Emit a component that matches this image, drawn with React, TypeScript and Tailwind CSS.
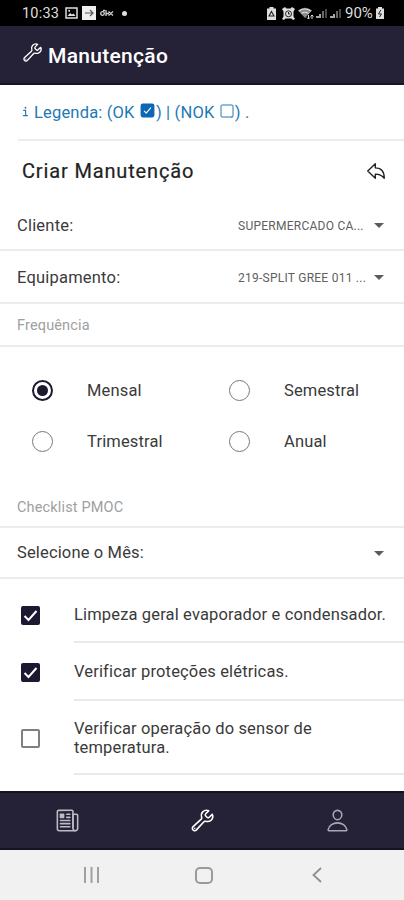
import React, { useState } from "react";
import {
  IoArrowUndoOutline,
  IoBuildOutline,
  IoCheckbox,
  IoInformationOutline,
  IoNewspaperOutline,
  IoPersonOutline,
  IoSquareOutline,
} from "react-icons/io5";

const frequencies = ["Mensal", "Semestral", "Trimestral", "Anual"];

const initialTasks = [
  { label: "Limpeza geral evaporador e condensador.", done: true, height: "h-[56px]" },
  { label: "Verificar proteções elétricas.", done: true, height: "h-[58px]" },
  { label: "Verificar operação do sensor de temperatura.", done: false, height: "h-[74px]" },
];

function StatusBar() {
  return (
    <div className="h-[26px] shrink-0 bg-black text-[#dedede] flex items-center justify-between pl-[22px] pr-[20px]">
      <div className="flex items-center">
        <span className="w-[37px] pt-[2px] text-[14.5px] leading-none tracking-[0.2px]">10:33</span>
        <svg width="13" height="12" viewBox="0 0 13 12" className="ml-[6px]">
          <rect x="1" y="1" width="11" height="10" fill="none" stroke="#dedede" strokeWidth="1.5" />
          <path d="M2.5 9l2.5-3 2 1.6 1.5-1L10.5 9z" fill="#dedede" />
          <circle cx="4.2" cy="3.8" r="1" fill="#dedede" />
        </svg>
        <svg width="14" height="14" viewBox="0 0 14 14" className="ml-[4px]">
          <rect width="14" height="14" fill="#eeeeee" />
          <path d="M3 7h8M8 4l3 3-3 3" fill="none" stroke="#555555" strokeWidth="1.2" />
        </svg>
        <svg width="14" height="8" viewBox="0 0 14 8" className="ml-[4px]" fill="none" stroke="#cfcfcf" strokeWidth="1.3">
          <circle cx="2.5" cy="4.5" r="1.8" />
          <path d="M3 1.5h2M6 1v6M8.5 2.5L13 6.5M13 2.5L8.5 6.5M6 4.5h3" />
        </svg>
        <span className="ml-[8px] w-[5px] h-[5px] rounded-full bg-[#dedede]" />
      </div>
      <div className="flex items-center">
        <svg width="9" height="13" viewBox="0 0 9 13">
          <path d="M2.5 0h4v1.5H9V13H0V1.5h2.5z" fill="#dedede" />
          <path d="M4.5 4.5L7 9H2z" fill="none" stroke="#222222" strokeWidth="1.1" />
        </svg>
        <svg width="13" height="13" viewBox="0 0 13 13" className="ml-[6px]">
          <path d="M0 2l3-2 1.5 1.5h4L10 0l3 2-1.5 2.5v5L13 12l-2 1-1.5-1.5h-6L2 13l-2-1 1.5-2.5v-5z" fill="#dedede" />
          <circle cx="6.5" cy="6.8" r="3" fill="none" stroke="#222222" strokeWidth="1" />
          <path d="M6.5 5v2h1.5" fill="none" stroke="#222222" strokeWidth="1" />
        </svg>
        <svg width="17" height="13" viewBox="0 0 17 13" className="ml-[3px]">
          <path d="M0 3.5Q7 -2 14 3.5L7 11z" fill="#8c8c8c" />
          <path d="M1 4q6-4 12 0M3.5 6.5q3.5-2.5 7 0" fill="none" stroke="#dedede" strokeWidth="1.2" />
          <path d="M10.5 8v4M9 10.5l1.5 1.5 1.5-1.5M14 12V8M12.5 9.5L14 8l1.5 1.5" fill="none" stroke="#dedede" />
        </svg>
        <svg width="27" height="12" viewBox="0 0 27 12">
          <path d="M1 10h3M5 11V7M19 11V7M15 10h3" stroke="#dedede" strokeWidth="1.5" />
          <path d="M8 11V4M22 11V4" stroke="#8a8a8a" strokeWidth="1.5" />
          <path d="M11 11V2M25 11V2" stroke="#4a4a4a" strokeWidth="2" />
        </svg>
        <span className="ml-[3px] w-[31px] pt-[1px] text-[15px] leading-none">90%</span>
        <svg width="8" height="12" viewBox="0 0 8 12">
          <path d="M2 0h4v1.5h2V12H0V1.5h2z" fill="#dedede" />
          <path d="M4.8 3L2.5 7h3L3.5 10" fill="none" stroke="#222222" />
        </svg>
      </div>
    </div>
  );
}

function Caret() {
  return (
    <svg width="10" height="5" viewBox="0 0 10 5" className="shrink-0">
      <path d="M0 0h10L5 5z" fill="#5c5c5c" />
    </svg>
  );
}

function Checkbox({ checked }: { checked: boolean }) {
  if (!checked) {
    return <span className="block w-[19px] h-[19px] rounded-[2px] border-2 border-[#808080] bg-white" />;
  }
  return (
    <span className="block w-[19px] h-[19px] rounded-[2px] bg-[#1b1830]">
      <svg width="19" height="19" viewBox="0 0 19 19">
        <path d="M3.5 10l4 4L15.5 5" fill="none" stroke="#ffffff" strokeWidth="2" />
      </svg>
    </span>
  );
}

export default function App() {
  const [frequency, setFrequency] = useState("Mensal");
  const [tasks, setTasks] = useState(initialTasks);

  const toggleTask = (index: number) => {
    setTasks(tasks.map((t, i) => (i === index ? { ...t, done: !t.done } : t)));
  };

  return (
    <div className="w-[404px] h-[900px] overflow-hidden bg-white flex flex-col font-['Roboto',sans-serif] text-[#3a3a3a]">
      <StatusBar />

      {/* Header */}
      <header className="h-[59px] shrink-0 bg-[#252136] border-b-2 border-[#17151f] flex items-center pl-[22px] text-white">
        <IoBuildOutline className="w-[21px] h-[21px] -mt-[4px]" />
        <h1 className="ml-[5px] mt-[3px] text-[21px] font-medium leading-none tracking-[0.3px]">Manutenção</h1>
      </header>

      <main className="flex-1 min-h-0 flex flex-col">
        {/* Legend */}
        <div className="h-[56px] pt-[2px] shrink-0 ml-[18px] border-b-2 border-[#ececec] flex items-center text-[16.5px] leading-none tracking-[0.18px] text-[#2279b5] whitespace-pre">
          <IoInformationOutline className="w-[15px] h-[15px] -mt-[4px]" />
          <span className="ml-[1px]">Legenda: (OK </span>
          <IoCheckbox className="w-[17px] h-[17px] -mt-[5px] text-[#0c66b4]" />
          <span>) | (NOK </span>
          <IoSquareOutline className="w-[16px] h-[16px] -mt-[5px]" />
          <span>) .</span>
        </div>

        <div className="h-[59px] shrink-0 flex items-center justify-between pl-[22px] pr-[17px]">
          <h2 className="text-[20px] leading-none tracking-[0.85px] text-[#222222] [-webkit-text-stroke:0.2px]">Criar Manutenção</h2>
          <IoArrowUndoOutline className="w-[22px] h-[22px] text-[#222222]" />
        </div>

        {/* Selects */}
        <div className="h-[51px] pt-[2px] shrink-0 border-b-2 border-[#ececec] flex items-center pl-[17px] pr-[20px]">
          <span className="flex-1 pt-[2px] text-[16.5px] tracking-[0.2px]">Cliente:</span>
          <span className="w-[136px] text-[12px] tracking-[0.25px] text-[#606060] whitespace-nowrap">SUPERMERCADO CA...</span>
          <Caret />
        </div>
        <div className="h-[53px] pt-[2px] shrink-0 border-b-2 border-[#ececec] flex items-center pl-[17px] pr-[20px]">
          <span className="flex-1 pt-[2px] text-[16.5px] tracking-[0.2px]">Equipamento:</span>
          <span className="w-[136px] text-[12px] tracking-[0.25px] text-[#606060] whitespace-nowrap">219-SPLIT GREE 011 ...</span>
          <Caret />
        </div>

        {/* Frequency */}
        <div className="h-[43px] pt-[2px] shrink-0 border-b-2 border-[#ececec] flex items-center pl-[17px] text-[14.5px] tracking-[0.15px] text-[#a0a0a0]">
          Frequência
        </div>
        <div className="pt-[18px] pl-[32px] grid grid-cols-[197px_1fr] shrink-0">
          {frequencies.map((f) => (
            <button key={f} onClick={() => setFrequency(f)} className="h-[51px] flex items-center text-left">
              <span
                className={`w-[21px] h-[21px] rounded-full flex items-center justify-center ${
                  frequency === f ? "border-2 border-[#1b1830]" : "border-[1.5px] border-[#777777]"
                }`}
              >
                {frequency === f && <span className="w-[11px] h-[11px] rounded-full bg-[#1b1830]" />}
              </span>
              <span className="ml-[34px] pt-[2px] text-[16.5px] tracking-[0.15px]">{f}</span>
            </button>
          ))}
        </div>

        {/* Checklist */}
        <div className="h-[61px] shrink-0 border-b-2 border-[#ececec] flex items-end pb-[7px] pl-[17px] text-[14.5px] tracking-[0.15px] text-[#a0a0a0]">
          Checklist PMOC
        </div>
        <div className="h-[51px] pt-[1px] shrink-0 border-b-2 border-[#ececec] flex items-center justify-between pl-[17px] pr-[20px] text-[16.5px] tracking-[0.15px]">
          <span>Selecione o Mês:</span>
          <Caret />
        </div>
        <div className="pt-[8px] shrink-0">
          {tasks.map((task, i) => (
            <div key={task.label} className={`flex items-center pl-[21px] ${task.height}`}>
              <button onClick={() => toggleTask(i)}>
                <Checkbox checked={task.done} />
              </button>
              <div className="ml-[34px] pt-[1px] flex-1 h-full border-b-2 border-[#e9e9e9] flex items-center pr-[10px] text-[16.5px] leading-[19px] tracking-[0.15px]">
                {task.label}
              </div>
            </div>
          ))}
        </div>
      </main>

      {/* Tabs */}
      <nav className="h-[59px] shrink-0 bg-[#252136] border-y-2 border-[#14121d] flex items-center pl-[55px] gap-[110px]">
        <IoNewspaperOutline className="w-[25px] h-[25px] text-[#bdbbc6]" />
        <IoBuildOutline className="w-[25px] h-[25px] text-white" />
        <IoPersonOutline className="w-[25px] h-[25px] text-[#a9a7b6]" />
      </nav>

      <div className="h-[50px] shrink-0 bg-[#f1f1f1] flex items-center pl-[83px]">
        <svg width="17" height="16" viewBox="0 0 17 16" className="shrink-0">
          <path d="M2 0v16M8.5 0v16M15 0v16" stroke="#a0a0a0" strokeWidth="2" />
        </svg>
        <span className="ml-[95px] w-[18px] h-[17px] rounded-[5px] border-2 border-[#9a9a9a]" />
        <svg width="10" height="16" viewBox="0 0 10 16" className="ml-[99px]">
          <path d="M9 1L1.5 8 9 15" fill="none" stroke="#8e8e8e" strokeWidth="1.8" />
        </svg>
      </div>
    </div>
  );
}
